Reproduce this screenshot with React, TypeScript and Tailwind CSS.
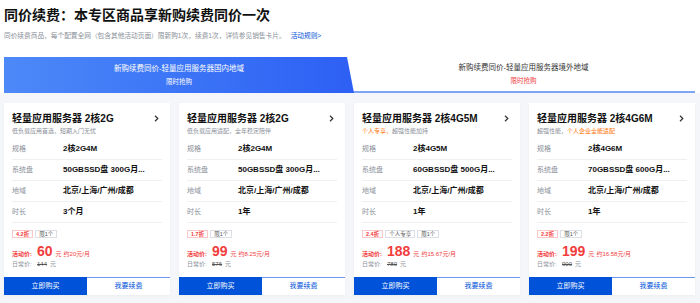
import React from 'react';

type Plan = {
  title: string;
  sub: React.ReactNode;
  spec: string;
  disk: string;
  term: string;
  discount: string;
  tags: string[];
  price: string;
  monthly: string;
  original: string;
};

const plans: Plan[] = [
  {
    title: '轻量应用服务器 2核2G',
    sub: <>低负载应用首选，短期入门无忧</>,
    spec: '2核2G4M',
    disk: '50GBSSD盘 300G月...',
    term: '3个月',
    discount: '4.2折',
    tags: ['限1个'],
    price: '60',
    monthly: '约20元/月',
    original: '144',
  },
  {
    title: '轻量应用服务器 2核2G',
    sub: <>低负载应用适配，全年稳定陪伴</>,
    spec: '2核2G4M',
    disk: '50GBSSD盘 300G月...',
    term: '1年',
    discount: '1.7折',
    tags: ['限1个'],
    price: '99',
    monthly: '约8.25元/月',
    original: '576',
  },
  {
    title: '轻量应用服务器 2核4G5M',
    sub: (
      <>
        <span className="text-[#ff7200]">个人专享，</span>超强性能加持
      </>
    ),
    spec: '2核4G5M',
    disk: '60GBSSD盘 500G月...',
    term: '1年',
    discount: '2.4折',
    tags: ['个人专享', '限1个'],
    price: '188',
    monthly: '约15.67元/月',
    original: '780',
  },
  {
    title: '轻量应用服务器 2核4G6M',
    sub: (
      <>
        超强性能，<span className="text-[#ff7200]">个人企业全能适配</span>
      </>
    ),
    spec: '2核4G6M',
    disk: '70GBSSD盘 600G月...',
    term: '1年',
    discount: '2.2折',
    tags: ['限1个'],
    price: '199',
    monthly: '约16.58元/月',
    original: '900',
  },
];

function Row({ label, value }: { label: string; value: string }) {
  return (
    <div className="flex items-center h-[21px] border-b border-[#eef0f3]">
      <span className="w-[51px] text-[7px] text-[#8a8f99]">{label}</span>
      <span className="text-[8px] font-bold text-[#111]">{value}</span>
    </div>
  );
}

function PlanCard({ plan }: { plan: Plan }) {
  return (
    <div className="h-[192px] bg-white flex flex-col shadow-[0_1px_3px_rgba(0,0,0,0.04)]">
      <div className="px-2 pt-[9px]">
        <div className="flex items-center justify-between h-[13px]">
          <span className="text-[10px] font-bold text-[#111] leading-[13px]">{plan.title}</span>
          <svg width="5" height="7" viewBox="0 0 5 7" className="mr-[3px]">
            <path d="M1 0.8 L3.8 3.5 L1 6.2" stroke="#333" strokeWidth="1.2" fill="none" />
          </svg>
        </div>
        <div className="mt-[2px] h-[9px] flex items-center text-[6px] text-[#8a8f99]">
          <span>{plan.sub}</span>
        </div>
        <div className="mt-[3px]">
          <Row label="规格" value={plan.spec} />
          <Row label="系统盘" value={plan.disk} />
          <Row label="地域" value="北京/上海/广州/成都" />
          <Row label="时长" value={plan.term} />
        </div>
        <div className="flex gap-[2px] mt-[7px] h-[8px]">
          <span className="h-[8px] px-[3px] border border-[#fbc7c7] text-[#f23d3d] text-[5.5px] font-bold flex items-center">
            {plan.discount}
          </span>
          {plan.tags.map((t) => (
            <span key={t} className="h-[8px] px-[3px] border border-[#dcdfe5] text-[#555] text-[5.5px] flex items-center">
              {t}
            </span>
          ))}
        </div>
        <div className="flex items-baseline mt-[5px] h-[17px] text-[#f23d3d]">
          <span className="w-[25px] text-[6px] font-bold">活动价:</span>
          <span className="text-[14px] font-bold leading-[17px]">{plan.price}</span>
          <span className="text-[6px] ml-[3px]">元</span>
          <span className="text-[6px] ml-[2px]">{plan.monthly}</span>
        </div>
        <div className="flex items-center h-[9px] text-[6px] text-[#8a8f99]">
          <span className="w-[25px]">日常价:</span>
          <span className="line-through text-[#555]">{plan.original}</span>
          <span className="ml-[3px]">元</span>
        </div>
      </div>
      <div className="mt-auto grid grid-cols-2 h-[18px] text-[7px]">
        <button className="bg-[#0052d9] text-white flex items-center justify-center">立即购买</button>
        <button className="bg-white text-[#0052d9] border-t border-[#6f98ee] flex items-center justify-center">我要续费</button>
      </div>
    </div>
  );
}

export default function App() {
  return (
    <div className="w-[700px] h-[303px] overflow-hidden bg-[#f4f6f9] font-['Liberation_Sans','Noto_Sans_CJK_SC',sans-serif]">
      <div className="bg-white pl-1 pr-[5px] pt-[6px]">
        <h1 className="h-[18px] flex items-center text-[14px] font-bold text-[#111]">同价续费：本专区商品享新购续费同价一次</h1>
        <div className="mt-[7px] h-[10px] flex items-center text-[6.7px] text-[#8a8f99]">
          <span>同价续费商品，每个配置全网（包含其他活动页面）限新购1次，续费1次，详情参见销售卡片。</span>
          <span className="ml-[5px] text-[#0052d9]">活动规则&gt;</span>
        </div>
        <div className="mt-[16px] flex h-[36px]">
          <div className="w-[350px] bg-gradient-to-r from-[#4d89f8] to-[#2d5ff4] [clip-path:polygon(0_0,calc(100%-7px)_0,100%_100%,0_100%)] flex flex-col items-center justify-center text-white">
            <span className="h-[11px] flex items-center text-[7.5px]">新购续费同价-轻量应用服务器国内地域</span>
            <span className="h-[10px] flex items-center text-[6.5px] mt-[2px]">限时抢购</span>
          </div>
          <div className="flex-1 flex flex-col items-center justify-center border-b-2 border-[#7ea4f6] -ml-[2px]">
            <span className="h-[11px] flex items-center text-[7.5px] text-[#333]">新购续费同价-轻量应用服务器境外地域</span>
            <span className="h-[10px] flex items-center text-[6.5px] mt-[2px] text-[#f23d3d]">限时抢购</span>
          </div>
        </div>
      </div>
      <div className="grid grid-cols-4 items-start gap-[9px] pl-1 pr-[5px] pt-[10px]">
        {plans.map((p, i) => (
          <PlanCard key={i} plan={p} />
        ))}
      </div>
    </div>
  );
}
